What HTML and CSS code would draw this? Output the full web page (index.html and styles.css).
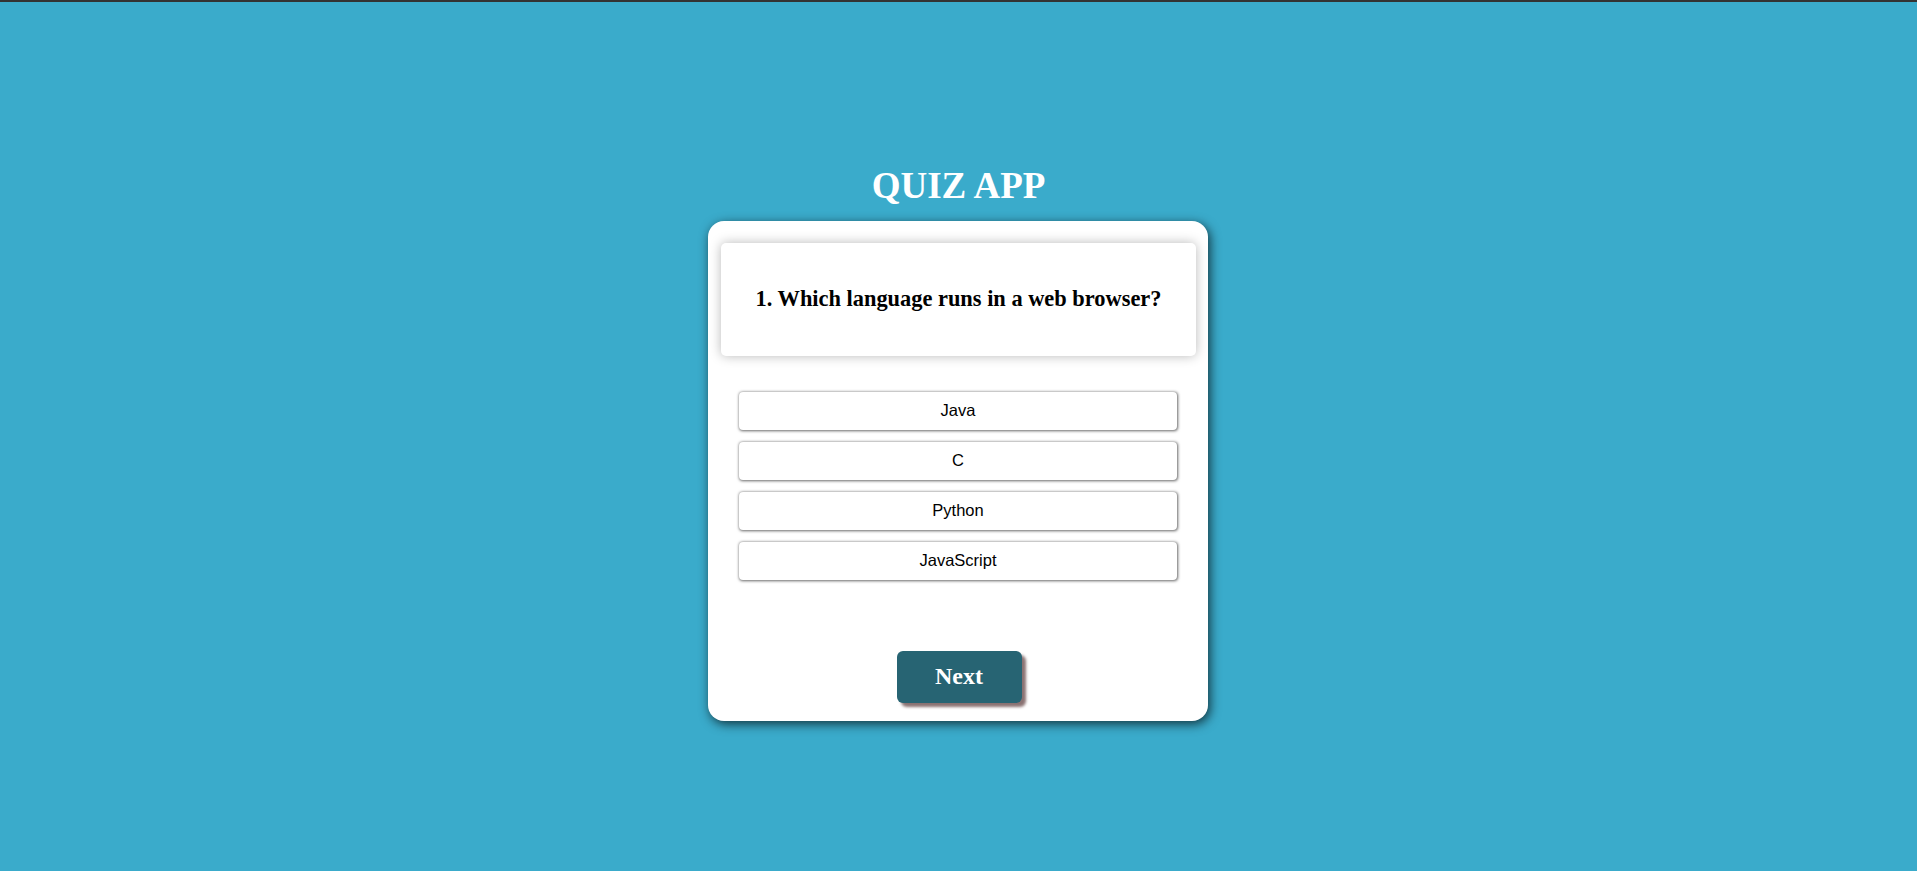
FILE: index.html
```html
<!DOCTYPE html>
<html lang="en">
<head>
<meta charset="utf-8">
<title>Quiz App</title>
<link rel="stylesheet" href="styles.css">
</head>
<body>
<div class="page">
  <h1 class="title">QUIZ APP</h1>
  <div class="card">
    <div class="question">
      <h2 class="question-text">1. Which language runs in a web browser?</h2>
    </div>
    <div class="options">
      <button class="option">Java</button>
      <button class="option">C</button>
      <button class="option">Python</button>
      <button class="option">JavaScript</button>
    </div>
    <div class="actions">
      <button class="next">Next</button>
    </div>
  </div>
</div>
</body>
</html>
```

FILE: styles.css
```css
html, body {
  margin: 0;
  padding: 0;
  height: 100%;
}
body {
  background: #3aabcb;
  font-family: "Liberation Serif", "Times New Roman", serif;
}
.page {
  border-top: 2px solid #333333;
  padding-top: 163px;
  display: flex;
  flex-direction: column;
  align-items: center;
  box-sizing: border-box;
  min-height: 100%;
}
.title {
  margin: 0 0 13.5px 0;
  font-size: 37px;
  line-height: 42px;
  font-weight: bold;
  color: #ffffff;
}
.card {
  width: 500px;
  height: 500px;
  box-sizing: border-box;
  background: #ffffff;
  border-radius: 16px;
  box-shadow: 2px 3px 11px rgba(0, 0, 0, 0.7);
  padding: 22px 12px 18px 13px;
  display: flex;
  flex-direction: column;
  margin-right: 1px;
}
.question {
  height: 113px;
  border-radius: 5px;
  background: #ffffff;
  box-shadow: 0 0 12px rgba(0, 0, 0, 0.28);
  display: flex;
  align-items: center;
  justify-content: center;
}
.question-text {
  margin: 0;
  font-size: 22.4px;
  font-weight: bold;
  color: #000000;
}
.options {
  margin-top: 36px;
  padding: 0 19px 0 18px;
  display: flex;
  flex-direction: column;
  gap: 12px;
}
.option {
  height: 38px;
  border: none;
  border-radius: 4px;
  background: #ffffff;
  box-shadow: 0.5px 0.5px 3px rgba(0, 0, 0, 0.6);
  font-family: "Liberation Sans", Arial, sans-serif;
  font-size: 16.5px;
  color: #000000;
  padding: 0;
}
.actions {
  margin-top: auto;
  display: flex;
  justify-content: center;
}
.next {
  width: 125px;
  height: 52px;
  border: none;
  border-radius: 6px;
  background: #276473;
  color: #ffffff;
  font-family: "Liberation Serif", "Times New Roman", serif;
  font-weight: bold;
  font-size: 24px;
  box-shadow: 4px 4px 3px #8a7272;
  padding: 0;
  margin-left: 1px;
}
```
